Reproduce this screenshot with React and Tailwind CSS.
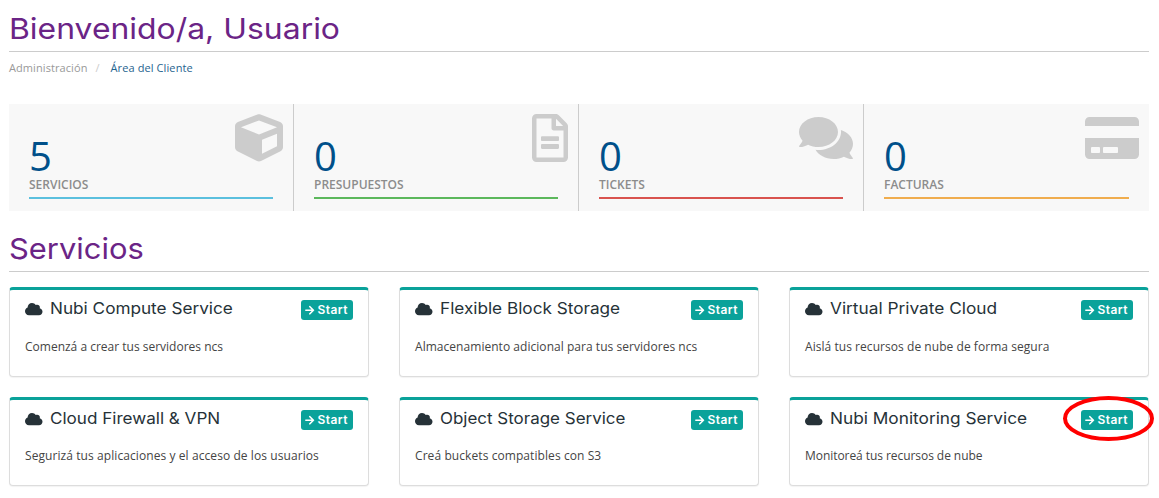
import { FaCube, FaRegFileAlt, FaComments, FaCreditCard, FaCloud, FaArrowRight } from 'react-icons/fa';

const stats = [
  { value: 5, label: 'SERVICIOS', line: 'bg-[#5bc0de]', Icon: FaCube, icon: 'w-12' },
  { value: 0, label: 'PRESUPUESTOS', line: 'bg-[#5cb85c]', Icon: FaRegFileAlt, icon: 'w-9' },
  { value: 0, label: 'TICKETS', line: 'bg-[#d9534f]', Icon: FaComments, icon: 'w-[54px]' },
  { value: 0, label: 'FACTURAS', line: 'bg-[#f0ad4e]', Icon: FaCreditCard, icon: 'w-[54px]' },
];

const services = [
  { title: 'Nubi Compute Service', text: 'Comenzá a crear tus servidores ncs', ls: 'scale-x-[1.073]', ts: 'tracking-[0px]' },
  { title: 'Flexible Block Storage', text: 'Almacenamiento adicional para tus servidores ncs', ls: 'scale-x-[1.073]', ts: 'tracking-[0.04px]' },
  { title: 'Virtual Private Cloud', text: 'Aislá tus recursos de nube de forma segura', ls: 'scale-x-[1.079]', ts: 'tracking-[0.05px]' },
  { title: 'Cloud Firewall & VPN', text: 'Segurizá tus aplicaciones y el acceso de los usuarios', ls: 'scale-x-[1.067]', ts: 'tracking-[0.08px]' },
  { title: 'Object Storage Service', text: 'Creá buckets compatibles con S3', ls: 'scale-x-[1.06]', ts: 'tracking-[0.08px]' },
  { title: 'Nubi Monitoring Service', text: 'Monitoreá tus recursos de nube', ls: 'scale-x-[1.078]', ts: 'tracking-[-0.06px]', marked: true },
];

function Stat({ value, label, line, Icon, icon, last }) {
  return (
    <div className={`relative h-[107px] px-5 pt-[31px] ${last ? '' : 'border-r border-[#cccccc]'}`}>
      <Icon className={`absolute top-[10px] right-[10px] h-12 text-[#cccccc] ${icon}`} />
      <div className="text-[40px] leading-[42px] text-[#00508a]">{value}</div>
      <div className="text-[12px] leading-[16px] font-semibold text-[#8c8c8c]">{label}</div>
      <div className={`mt-1 h-[2px] ${line}`} />
    </div>
  );
}

function Service({ title, text, ls, ts, marked, lower }) {
  return (
    <article className={`rounded-[4px] border border-t-[3px] border-[#dddddd] border-t-[#0aa29a] bg-white px-[15px] shadow-[0_1px_1px_rgba(0,0,0,0.05)] ${lower ? 'h-[89px]' : 'h-[90px]'}`}>
      <div className="flex pt-[10px]">
        <FaCloud className="mt-[2px] mr-[7.5px] h-[14px] w-[17.5px] text-[#263238]" />
        <h3 className={`h-5 origin-left whitespace-nowrap font-['Inter',sans-serif] text-[16px] leading-[17px] text-[#263238] ${ls}`}>{title}</h3>
        <div className="relative ml-auto">
          <a className="flex h-5 w-[52px] items-center rounded-[3px] bg-[#0aa29a] pl-1 font-['Inter',sans-serif] text-[12px] font-semibold tracking-[0.45px] text-white">
            <FaArrowRight className="mr-[3px] h-[10.5px] w-[9.5px]" />
            Start
          </a>
          {marked && (
            <svg className="absolute -top-[15px] -left-[20px] h-[48px] w-[96px]" viewBox="0 0 96 48">
              <ellipse cx="47.5" cy="23.5" rx="43.5" ry="20.5" fill="none" stroke="#ff0000" strokeWidth="4" />
            </svg>
          )}
        </div>
      </div>
      <p className={`whitespace-nowrap font-['Open_Sans',sans-serif] text-[12px] leading-4 text-[#444444] ${lower ? 'mt-[18px]' : 'mt-[19px]'} ${ts}`}>{text}</p>
    </article>
  );
}

export default function App() {
  return (
    <main className="h-[498px] overflow-hidden bg-white pr-[10px] pl-[9px] font-['Open_Sans',sans-serif]">
      <h1 className="h-[52px] border-b border-[#cccccc] pt-[11px] font-['Inter',sans-serif] text-[29px] leading-9 text-[#6b2486]">
        <span className="inline-block origin-left scale-x-[1.1]">Bienvenido/a, Usuario</span>
      </h1>
      <nav className="flex h-[52px] pt-2 text-[11px] leading-4 text-[#999999]">
        <span className="tracking-[0.08px]">Administración</span>
        <span className="mr-[11px] ml-2 text-[#cccccc]">/</span>
        <span className="tracking-[0.1px] text-[#1f648f]">Área del Cliente</span>
      </nav>
      <section className="grid grid-cols-4 bg-[#f8f8f8]">
        {stats.map((s, i) => <Stat key={s.label} {...s} last={i === 3} />)}
      </section>
      <h2 className="mt-5 h-[41px] border-b border-[#cccccc] font-['Inter',sans-serif] text-[29px] leading-9 text-[#6b2486]">
        <span className="inline-block origin-left scale-x-[1.065]">Servicios</span>
      </h2>
      <section className="mt-[15px] grid grid-cols-3 gap-x-[30px] gap-y-5">
        {services.map((s, i) => <Service key={s.title} {...s} lower={i > 2} />)}
      </section>
    </main>
  );
}
